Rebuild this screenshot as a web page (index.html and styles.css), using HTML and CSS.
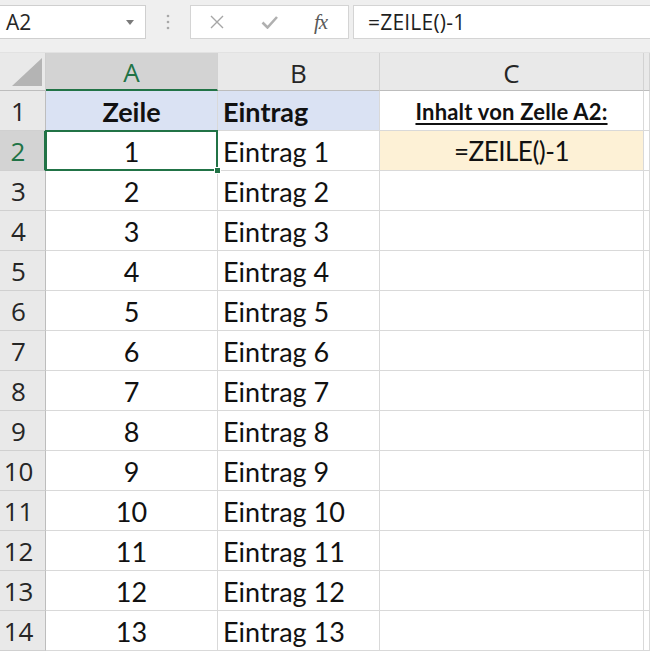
FILE: index.html
```html
<!DOCTYPE html>
<html lang="de">
<head>
<meta charset="utf-8">
<title>ZEILE-Funktion</title>
<link rel="stylesheet" href="styles.css">
</head>
<body>
<div class="app">
  <div class="toolbar">
    <div class="namebox">
      <span class="namebox-ref">A2</span>
      <svg class="caret" width="8" height="5" viewBox="0 0 8 5"><path d="M0 0h8L4 5z" fill="#7a7a7a"/></svg>
    </div>
    <div class="grip">
      <svg width="4" height="16" viewBox="0 0 4 16"><circle cx="2" cy="2" r="1.3" fill="#a8a8a8"/><circle cx="2" cy="8" r="1.3" fill="#a8a8a8"/><circle cx="2" cy="14" r="1.3" fill="#a8a8a8"/></svg>
    </div>
    <div class="fxbox">
      <svg class="tool-x" width="14" height="14" viewBox="0 0 14 14"><path d="M1 1l12 12M13 1L1 13" stroke="#a6a6a6" stroke-width="1.4" fill="none"/></svg>
      <svg class="tool-ok" width="17" height="14" viewBox="0 0 17 14"><path d="M1.5 7.5l5 5L16 2" stroke="#b0b0b0" stroke-width="2.6" fill="none"/></svg>
      <span class="fx">fx</span>
    </div>
    <div class="formula">=ZEILE()-1</div>
  </div>

  <div class="sheet">
    <div class="corner"><span class="corner-tri"></span></div>
    <div class="colhead is-active">A</div>
    <div class="colhead">B</div>
    <div class="colhead">C</div>
    <div class="colhead"></div>

    <div class="rowhead">1</div>
    <div class="cell num head-fill bold">Zeile</div>
    <div class="cell text head-fill bold">Eintrag</div>
    <div class="cell center note"><span class="note-text">Inhalt von Zelle A2:</span></div>
    <div class="cell"></div>

    <div class="rowhead is-active">2</div>
    <div class="cell num is-selected">1<span class="fill-handle"></span></div>
    <div class="cell text">Eintrag 1</div>
    <div class="cell center formula-fill"><span class="formula-text">=ZEILE()-1</span></div>
    <div class="cell"></div>

    <div class="rowhead">3</div>
    <div class="cell num">2</div>
    <div class="cell text">Eintrag 2</div>
    <div class="cell"></div>
    <div class="cell"></div>

    <div class="rowhead">4</div>
    <div class="cell num">3</div>
    <div class="cell text">Eintrag 3</div>
    <div class="cell"></div>
    <div class="cell"></div>

    <div class="rowhead">5</div>
    <div class="cell num">4</div>
    <div class="cell text">Eintrag 4</div>
    <div class="cell"></div>
    <div class="cell"></div>

    <div class="rowhead">6</div>
    <div class="cell num">5</div>
    <div class="cell text">Eintrag 5</div>
    <div class="cell"></div>
    <div class="cell"></div>

    <div class="rowhead">7</div>
    <div class="cell num">6</div>
    <div class="cell text">Eintrag 6</div>
    <div class="cell"></div>
    <div class="cell"></div>

    <div class="rowhead">8</div>
    <div class="cell num">7</div>
    <div class="cell text">Eintrag 7</div>
    <div class="cell"></div>
    <div class="cell"></div>

    <div class="rowhead">9</div>
    <div class="cell num">8</div>
    <div class="cell text">Eintrag 8</div>
    <div class="cell"></div>
    <div class="cell"></div>

    <div class="rowhead">10</div>
    <div class="cell num">9</div>
    <div class="cell text">Eintrag 9</div>
    <div class="cell"></div>
    <div class="cell"></div>

    <div class="rowhead">11</div>
    <div class="cell num">10</div>
    <div class="cell text">Eintrag 10</div>
    <div class="cell"></div>
    <div class="cell"></div>

    <div class="rowhead">12</div>
    <div class="cell num">11</div>
    <div class="cell text">Eintrag 11</div>
    <div class="cell"></div>
    <div class="cell"></div>

    <div class="rowhead">13</div>
    <div class="cell num">12</div>
    <div class="cell text">Eintrag 12</div>
    <div class="cell"></div>
    <div class="cell"></div>

    <div class="rowhead">14</div>
    <div class="cell num">13</div>
    <div class="cell text">Eintrag 13</div>
    <div class="cell"></div>
    <div class="cell"></div>
  </div>
</div>
</body>
</html>
```

FILE: styles.css
```css
* {
  box-sizing: border-box;
}

html, body {
  margin: 0;
  padding: 0;
  background: #ffffff;
  overflow: hidden;
}

.app {
  width: 650px;
  height: 652px;
  overflow: hidden;
}

/* ---- formula bar ---- */
.toolbar {
  height: 53px;
  background: #efefef;
  display: flex;
  align-items: flex-start;
  padding-top: 5px;
  border-bottom: 1px solid #e2e2e2;
}

.namebox {
  width: 146px;
  height: 34px;
  background: #ffffff;
  border: 1px solid #cfcfcf;
  border-left: none;
  display: flex;
  align-items: center;
  justify-content: space-between;
  padding: 0 11px 0 6px;
  font-family: "Open Sans", "Noto Sans", sans-serif;
  font-size: 21px;
  color: #262626;
}

.grip {
  width: 44px;
  height: 34px;
  display: flex;
  align-items: center;
  justify-content: center;
}

.fxbox {
  width: 159px;
  height: 34px;
  background: #ffffff;
  border: 1px solid #d4d4d4;
  display: flex;
  align-items: center;
  padding-left: 19px;
}

.tool-x {
  margin-right: 37px;
}

.tool-ok {
  margin-right: 36px;
}

.fx {
  font-family: "Liberation Serif", "DejaVu Serif", serif;
  font-style: italic;
  font-size: 21px;
  color: #5a5a5a;
  letter-spacing: -1px;
}

.formula {
  flex: 1;
  height: 34px;
  margin-left: 4px;
  background: #ffffff;
  border: 1px solid #d4d4d4;
  border-right: none;
  display: flex;
  align-items: center;
  padding-left: 14px;
  font-family: "Open Sans", "Noto Sans", sans-serif;
  font-size: 21px;
  letter-spacing: 0.2px;
  color: #1f1f1f;
}

/* ---- worksheet grid ---- */
.sheet {
  display: grid;
  grid-template-columns: 46px 172px 162px 264px 1fr;
  grid-template-rows: 38px;
  grid-auto-rows: 40px;
  background: #ffffff;
}

.corner,
.colhead,
.rowhead {
  background: #e9e9e9;
  font-family: "Open Sans", "Noto Sans", sans-serif;
  color: #262626;
}

.corner {
  position: relative;
  border-right: 1px solid #cfcfcf;
  border-bottom: 1px solid #bdbdbd;
}

.corner-tri {
  position: absolute;
  right: 3px;
  bottom: 4px;
  width: 0;
  height: 0;
  border-left: 30px solid transparent;
  border-bottom: 28px solid #b4b4b4;
}

.colhead {
  display: flex;
  align-items: center;
  justify-content: center;
  font-size: 26px;
  padding-top: 2px;
  border-right: 1px solid #d2d2d2;
  border-bottom: 1px solid #bdbdbd;
}

.colhead.is-active {
  background: #d3d3d3;
  color: #217346;
  border-bottom: 2px solid #217346;
}

.rowhead {
  display: flex;
  align-items: center;
  justify-content: center;
  padding-right: 8px;
  padding-top: 1px;
  font-size: 26px;
  border-right: 1px solid #bdbdbd;
  border-bottom: 1px solid #d0d0d0;
}

.rowhead.is-active {
  background: #d3d3d3;
  color: #217346;
  border-right: 2px solid #217346;
}

.cell {
  position: relative;
  display: flex;
  align-items: center;
  padding-top: 1px;
  border-right: 1px solid #d9d9d9;
  border-bottom: 1px solid #d9d9d9;
  font-family: "Lato", "Open Sans", sans-serif;
  font-size: 27px;
  color: #111111;
  white-space: nowrap;
}

.cell.num,
.cell.center {
  justify-content: center;
}

.cell.text {
  padding-left: 5px;
}

.cell.bold {
  font-weight: 700;
}

.head-fill {
  background: #dae2f3;
}

.formula-fill {
  background: #fdf1d6;
}

.formula-text {
  font-size: 26px;
  letter-spacing: -0.5px;
}

.note-text {
  font-weight: 700;
  font-size: 22px;
  letter-spacing: 0.2px;
  text-decoration: underline;
  text-decoration-thickness: 2px;
  text-underline-offset: 3px;
}

/* active cell outline and fill handle */
.is-selected::after {
  content: "";
  position: absolute;
  left: -1px;
  top: -1px;
  right: -1px;
  bottom: -1px;
  border: 2px solid #217346;
  pointer-events: none;
}

.fill-handle {
  position: absolute;
  right: -4px;
  bottom: -4px;
  width: 7px;
  height: 7px;
  background: #217346;
  border: 1px solid #ffffff;
  z-index: 2;
}
```
